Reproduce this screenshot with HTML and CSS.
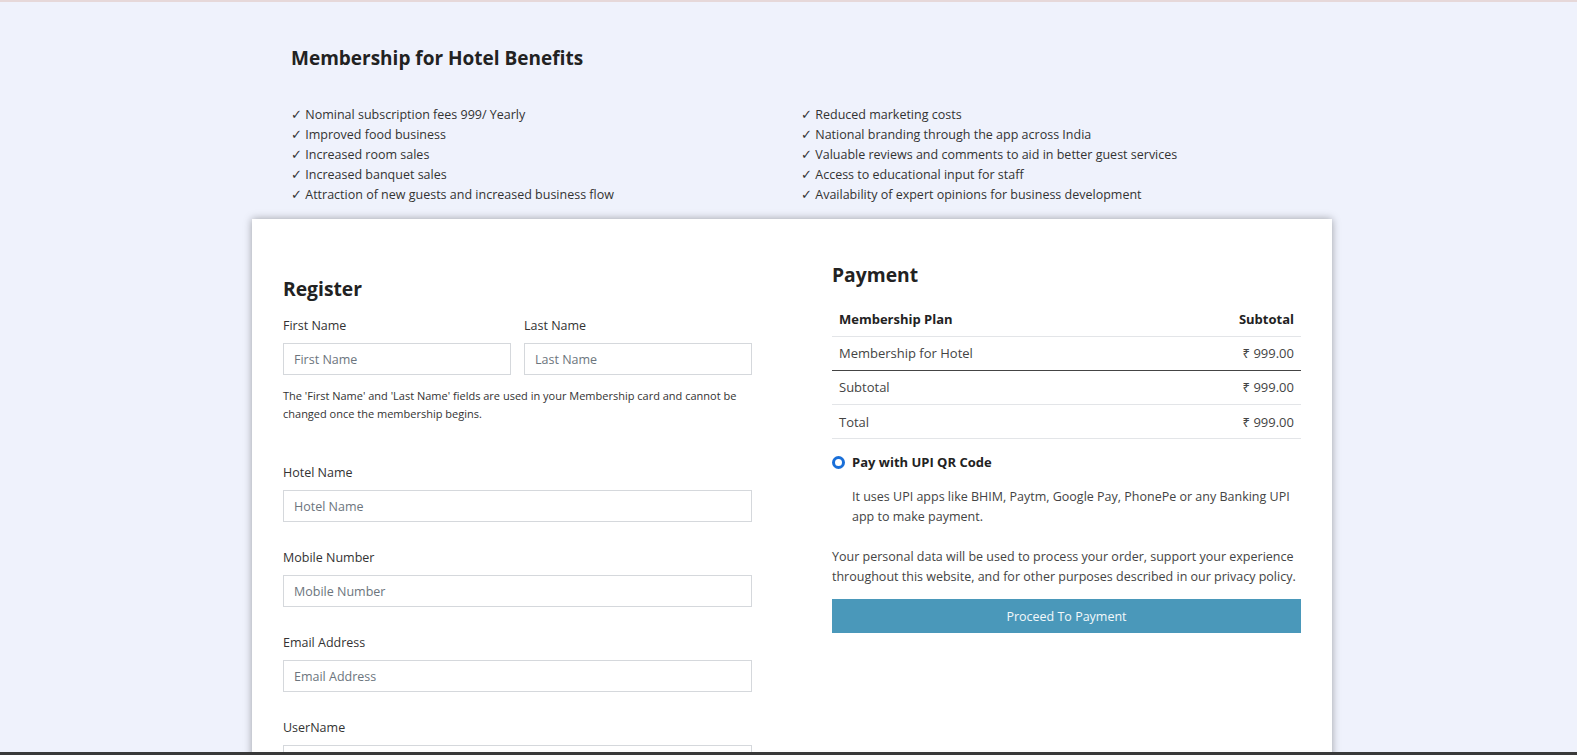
FILE: index.html
```html
<!DOCTYPE html>
<html lang="en">
<head>
<meta charset="utf-8">
<title>Membership for Hotel</title>
<link rel="stylesheet" href="styles.css">
</head>
<body>
<div class="page">
  <section class="benefits">
    <h2 class="benefits-title">Membership for Hotel Benefits</h2>
    <div class="benefit-cols">
      <ul class="benefit-list">
        <li>✓ Nominal subscription fees 999/ Yearly</li>
        <li>✓ Improved food business</li>
        <li>✓ Increased room sales</li>
        <li>✓ Increased banquet sales</li>
        <li>✓ Attraction of new guests and increased business flow</li>
      </ul>
      <ul class="benefit-list">
        <li>✓ Reduced marketing costs</li>
        <li>✓ National branding through the app across India</li>
        <li>✓ Valuable reviews and comments to aid in better guest services</li>
        <li>✓ Access to educational input for staff</li>
        <li>✓ Availability of expert opinions for business development</li>
      </ul>
    </div>
  </section>

  <main class="card">
    <div class="register">
      <h3 class="section-title">Register</h3>
      <div class="name-row">
        <div class="field">
          <label class="label">First Name</label>
          <input class="input" type="text" placeholder="First Name">
        </div>
        <div class="field">
          <label class="label">Last Name</label>
          <input class="input" type="text" placeholder="Last Name">
        </div>
      </div>
      <p class="note">The 'First Name' and 'Last Name' fields are used in your Membership card and cannot be changed once the membership begins.</p>
      <div class="field block">
        <label class="label">Hotel Name</label>
        <input class="input" type="text" placeholder="Hotel Name">
      </div>
      <div class="field block">
        <label class="label">Mobile Number</label>
        <input class="input" type="text" placeholder="Mobile Number">
      </div>
      <div class="field block">
        <label class="label">Email Address</label>
        <input class="input" type="text" placeholder="Email Address">
      </div>
      <div class="field block">
        <label class="label">UserName</label>
        <input class="input" type="text" placeholder="UserName">
      </div>
    </div>

    <div class="payment">
      <h3 class="section-title pay-title">Payment</h3>
      <table class="order">
        <thead>
          <tr><th class="left">Membership Plan</th><th class="right">Subtotal</th></tr>
        </thead>
        <tbody>
          <tr class="item"><td class="left">Membership for Hotel</td><td class="right">₹ 999.00</td></tr>
          <tr><td class="left">Subtotal</td><td class="right">₹ 999.00</td></tr>
          <tr><td class="left">Total</td><td class="right">₹ 999.00</td></tr>
        </tbody>
      </table>
      <div class="method">
        <span class="radio"></span>
        <span class="method-name">Pay with UPI QR Code</span>
      </div>
      <p class="method-desc">It uses UPI apps like BHIM, Paytm, Google Pay, PhonePe or any Banking UPI app to make payment.</p>
      <p class="privacy">Your personal data will be used to process your order, support your experience throughout this website, and for other purposes described in our privacy policy.</p>
      <button class="pay-btn" type="button">Proceed To Payment</button>
    </div>
  </main>
</div>
<div class="taskbar"></div>
</body>
</html>
```

FILE: styles.css
```css
* { box-sizing: border-box; }

html, body {
  margin: 0;
  padding: 0;
  height: 100%;
  overflow: hidden;
}

body {
  background: #eff2fc;
  border-top: 2px solid #e6d8d9;
  font-family: "Open Sans", "Noto Sans", sans-serif;
  color: #333;
  font-size: 12.5px;
}

.page {
  width: 1080px;
  margin-left: 252px;
}

.benefits {
  padding: 44px 0 0 39px;
}

.benefits-title {
  margin: 0;
  font-size: 19px;
  line-height: 24px;
  font-weight: 700;
  color: #222;
}

.benefit-cols {
  display: grid;
  grid-template-columns: 510px 510px;
  margin-top: 35px;
}

.benefit-list {
  list-style: none;
  margin: 0;
  padding: 0;
}

.benefit-list li {
  line-height: 20.1px;
  font-size: 12.5px;
  color: #333;
}

.card {
  margin-top: 14px;
  background: #fff;
  box-shadow: 0 0 8px rgba(0, 0, 0, 0.35);
  display: grid;
  grid-template-columns: 469px 469px;
  column-gap: 80px;
  padding: 44px 31px 40px 31px;
  height: 600px;
}

.section-title {
  margin: 0;
  font-size: 19.3px;
  line-height: 24px;
  font-weight: 700;
  color: #222;
}

.register .section-title {
  margin-top: 14px;
}

.name-row {
  display: grid;
  grid-template-columns: 1fr 1fr;
  column-gap: 13px;
  margin-top: 16px;
}

.field {
  display: flex;
  flex-direction: column;
}

.field.block {
  margin-top: 27px;
}

.note + .field.block {
  margin-top: 41px;
}

.label {
  line-height: 18px;
  font-size: 12.5px;
  color: #333;
}

.input {
  margin-top: 8px;
  height: 32px;
  border: 1px solid #d5d8dc;
  border-radius: 0;
  padding: 0 10px;
  font-family: inherit;
  font-size: 12.5px;
  color: #333;
  background: #fff;
}

.input::placeholder {
  color: #6c757d;
}

.note {
  margin: 12px 0 0;
  font-size: 11px;
  line-height: 18px;
  color: #333;
}

.order {
  width: 100%;
  border-collapse: collapse;
  margin-top: 15px;
  font-size: 13px;
}

.order th, .order td {
  padding: 6.6px 7px;
  line-height: 20px;
  border-bottom: 1px solid #e3e5e8;
}

.order th {
  font-weight: 700;
  color: #222;
}

.order td {
  color: #444;
}

.order .left { text-align: left; }
.order .right { text-align: right; }

.order tr.item td {
  border-bottom: 1px solid #444;
}

.method {
  display: flex;
  align-items: center;
  gap: 7px;
  margin-top: 13px;
  padding-left: 0;
  line-height: 20px;
}

.radio {
  width: 13px;
  height: 13px;
  border-radius: 50%;
  border: 3.5px solid #1a6fd8;
  background: #fff;
  flex: none;
}

.method-name {
  font-weight: 700;
  color: #222;
  font-size: 13px;
}

.method-desc {
  margin: 15px 0 0 20px;
  line-height: 20px;
  font-size: 12.5px;
  color: #444;
}

.privacy {
  margin: 20px 0 0;
  line-height: 20px;
  font-size: 12.5px;
  color: #444;
}

.pay-btn {
  display: block;
  width: 100%;
  margin-top: 12px;
  height: 34px;
  border: 0;
  background: #4a98ba;
  color: #f2f8fb;
  font-family: inherit;
  font-size: 12.5px;
}

.taskbar {
  position: fixed;
  left: 0;
  right: 0;
  bottom: 0;
  height: 3px;
  background: #3a3a3a;
}
```
